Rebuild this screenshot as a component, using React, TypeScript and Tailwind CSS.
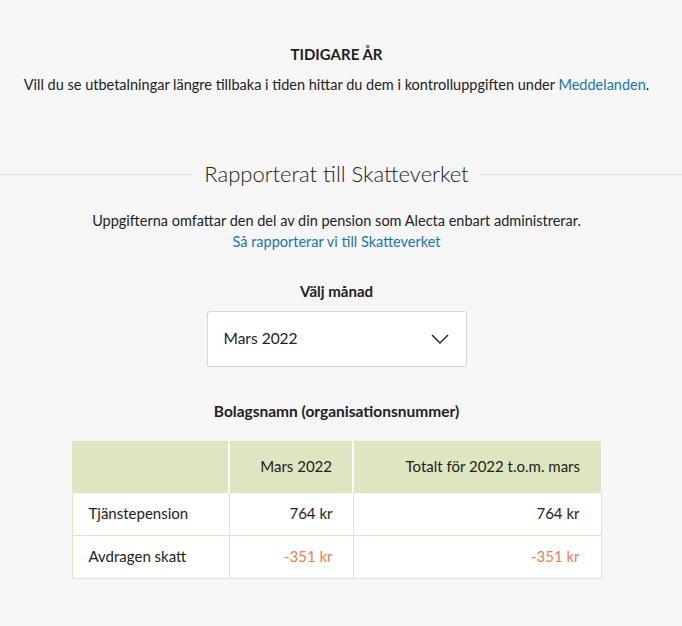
import React from "react";

const rows = [
  { label: "Tjänstepension", month: "764 kr", total: "764 kr", negative: false },
  { label: "Avdragen skatt", month: "-351 kr", total: "-351 kr", negative: true },
];

const App: React.FC = () => {
  return (
    <div className="min-h-[626px] bg-[#f6f6f6] text-[#222] font-['Lato','Open_Sans',sans-serif] pt-[45px] pr-[9px]">
      <div className="text-center">
        <h3 className="text-[15px] font-bold leading-[18px] text-[#1e1e1e]">TIDIGARE ÅR</h3>
        <p className="mt-[12px] text-[14.5px] leading-[20px]">
          Vill du se utbetalningar längre tillbaka i tiden hittar du dem i kontrolluppgiften under{" "}
          <a className="text-[#1b75a8]">Meddelanden</a>.
        </p>
      </div>

      <div className="mt-[64px] flex items-center gap-[12px]">
        <div className="h-px flex-1 bg-[#dcdcdc]" />
        <h2 className="text-[22px] font-light leading-[30px] text-[#222]">Rapporterat till Skatteverket</h2>
        <div className="h-px flex-[1_1_9px] mr-[-9px] bg-[#dcdcdc]" />
      </div>

      <div className="mt-[21px] text-center text-[14.5px] leading-[21px]">
        <p>Uppgifterna omfattar den del av din pension som Alecta enbart administrerar.</p>
        <a className="text-[#1b75a8]">Så rapporterar vi till Skatteverket</a>
      </div>

      <div className="mt-[29px] flex flex-col items-center">
        <label className="text-[15px] font-bold leading-[20px]">Välj månad</label>
        <button className="mt-[10px] flex h-[56px] w-[260px] items-center justify-between rounded-[3px] border border-[#d6d6d6] bg-white pl-[16px] pr-[16px] text-[15.5px]">
          <span>Mars 2022</span>
          <svg width="20" height="12" viewBox="0 0 20 12" fill="none" stroke="#222" strokeWidth="1.4">
            <path d="M2 2l8 8 8-8" />
          </svg>
        </button>
      </div>

      <h4 className="mt-[34px] text-center text-[15.5px] font-bold leading-[20px]">Bolagsnamn (organisationsnummer)</h4>

      <div className="mt-[20px] flex justify-center">
        <table className="w-[530px] border-collapse bg-white text-[15px]">
          <thead>
            <tr className="bg-[#dde6c1]">
              <th className="h-[51px] w-[157px] border-r-2 border-white" />
              <th className="w-[124px] border-r-2 border-white pr-[20px] text-right font-normal">Mars 2022</th>
              <th className="pr-[21px] text-right font-normal">Totalt för 2022 t.o.m. mars</th>
            </tr>
          </thead>
          <tbody>
            {rows.map((r) => (
              <tr key={r.label}>
                <td className="h-[43px] border border-[#dde6c1] pl-[16px]">{r.label}</td>
                <td className={`border border-[#dde6c1] pr-[20px] text-right ${r.negative ? "text-[#ef7d4f]" : ""}`}>{r.month}</td>
                <td className={`border border-[#dde6c1] pr-[21px] text-right ${r.negative ? "text-[#ef7d4f]" : ""}`}>{r.total}</td>
              </tr>
            ))}
          </tbody>
        </table>
      </div>
    </div>
  );
};

export default App;
